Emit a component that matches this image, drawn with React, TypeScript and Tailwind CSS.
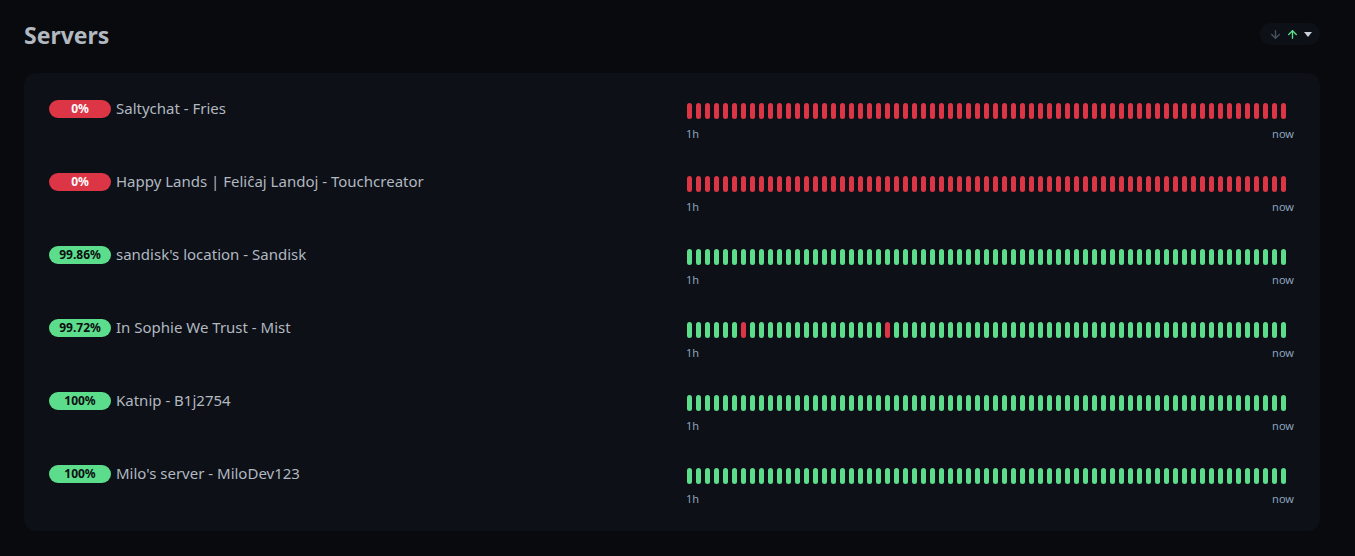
import { ArrowDown, ArrowUp } from 'lucide-react'

type Server = {
  name: string
  uptime: string
  down: number[] | 'all'
}

const BEATS = 67

const SERVERS: Server[] = [
  { name: 'Saltychat - Fries', uptime: '0%', down: 'all' },
  { name: 'Happy Lands | Feliĉaj Landoj - Touchcreator', uptime: '0%', down: 'all' },
  { name: "sandisk's location - Sandisk", uptime: '99.86%', down: [] },
  { name: 'In Sophie We Trust - Mist', uptime: '99.72%', down: [6, 22] },
  { name: 'Katnip - B1j2754', uptime: '100%', down: [] },
  { name: "Milo's server - MiloDev123", uptime: '100%', down: [] },
]

function UptimeBadge({ uptime, bad }: { uptime: string; bad: boolean }) {
  const cls = bad ? 'bg-[#dc3545] text-white' : 'bg-[#5cdd8b] text-[#0b0d11]'
  return (
    <span
      className={`mt-[2px] inline-flex h-[18px] w-[62px] shrink-0 items-center justify-center rounded-full text-[12px] font-bold leading-none ${cls}`}
    >
      {uptime}
    </span>
  )
}

function BeatBar({ down }: { down: number[] | 'all' }) {
  return (
    <div className="w-[608px] shrink-0">
      <div className="flex gap-[4px] pl-[1px] pt-[6px]">
        {Array.from({ length: BEATS }).map((_, i) => {
          const isDown = down === 'all' || down.includes(i)
          return (
            <div
              key={i}
              className={`h-[16px] w-[5px] rounded-full ${isDown ? 'bg-[#dc3545]' : 'bg-[#5cdd8b]'}`}
            />
          )
        })}
      </div>
      <div className="mt-[7px] flex justify-between text-[11px] leading-[15px] text-[#8aa2bd]">
        <span>1h</span>
        <span>now</span>
      </div>
    </div>
  )
}

function ServerRow({ server }: { server: Server }) {
  const bad = server.down === 'all'
  return (
    <div className="flex h-[40px] items-start">
      <div className="flex flex-1 items-start gap-[5px] pt-[1px]">
        <UptimeBadge uptime={server.uptime} bad={bad} />
        <span className="text-[15px] leading-[20px] text-[#b1b8c0]">{server.name}</span>
      </div>
      <BeatBar down={server.down} />
    </div>
  )
}

export default function App() {
  return (
    <div
      className="min-h-[556px] bg-[#090a0d] pl-[24px] pr-[35px] pt-[15px]"
      style={{ fontFamily: '"Noto Sans", "Open Sans", sans-serif' }}
    >
      <div className="flex h-[40px] items-center justify-between">
        <h1 className="text-[23px] font-bold leading-none text-[#b1b8c0]">Servers</h1>
        <button className="mt-[-2px] flex h-[22px] w-[60px] items-center justify-center gap-[4px] rounded-full bg-[#0d1017]">
          <ArrowDown className="h-[13px] w-[13px] text-[#4a5260]" strokeWidth={2.5} />
          <ArrowUp className="h-[13px] w-[13px] text-[#5cdd8b]" strokeWidth={2.5} />
          <svg width="8" height="5" viewBox="0 0 8 5" className="ml-[1px]">
            <path d="M0 0 L8 0 L4 5 Z" fill="#c9d0d8" />
          </svg>
        </button>
      </div>
      <div className="mt-[18px] rounded-[12px] bg-[#0d1017] pb-[29px] pl-[25px] pr-[26px] pt-[24px]">
        <div className="flex flex-col gap-[33px]">
          {SERVERS.map((s) => (
            <ServerRow key={s.name} server={s} />
          ))}
        </div>
      </div>
    </div>
  )
}
